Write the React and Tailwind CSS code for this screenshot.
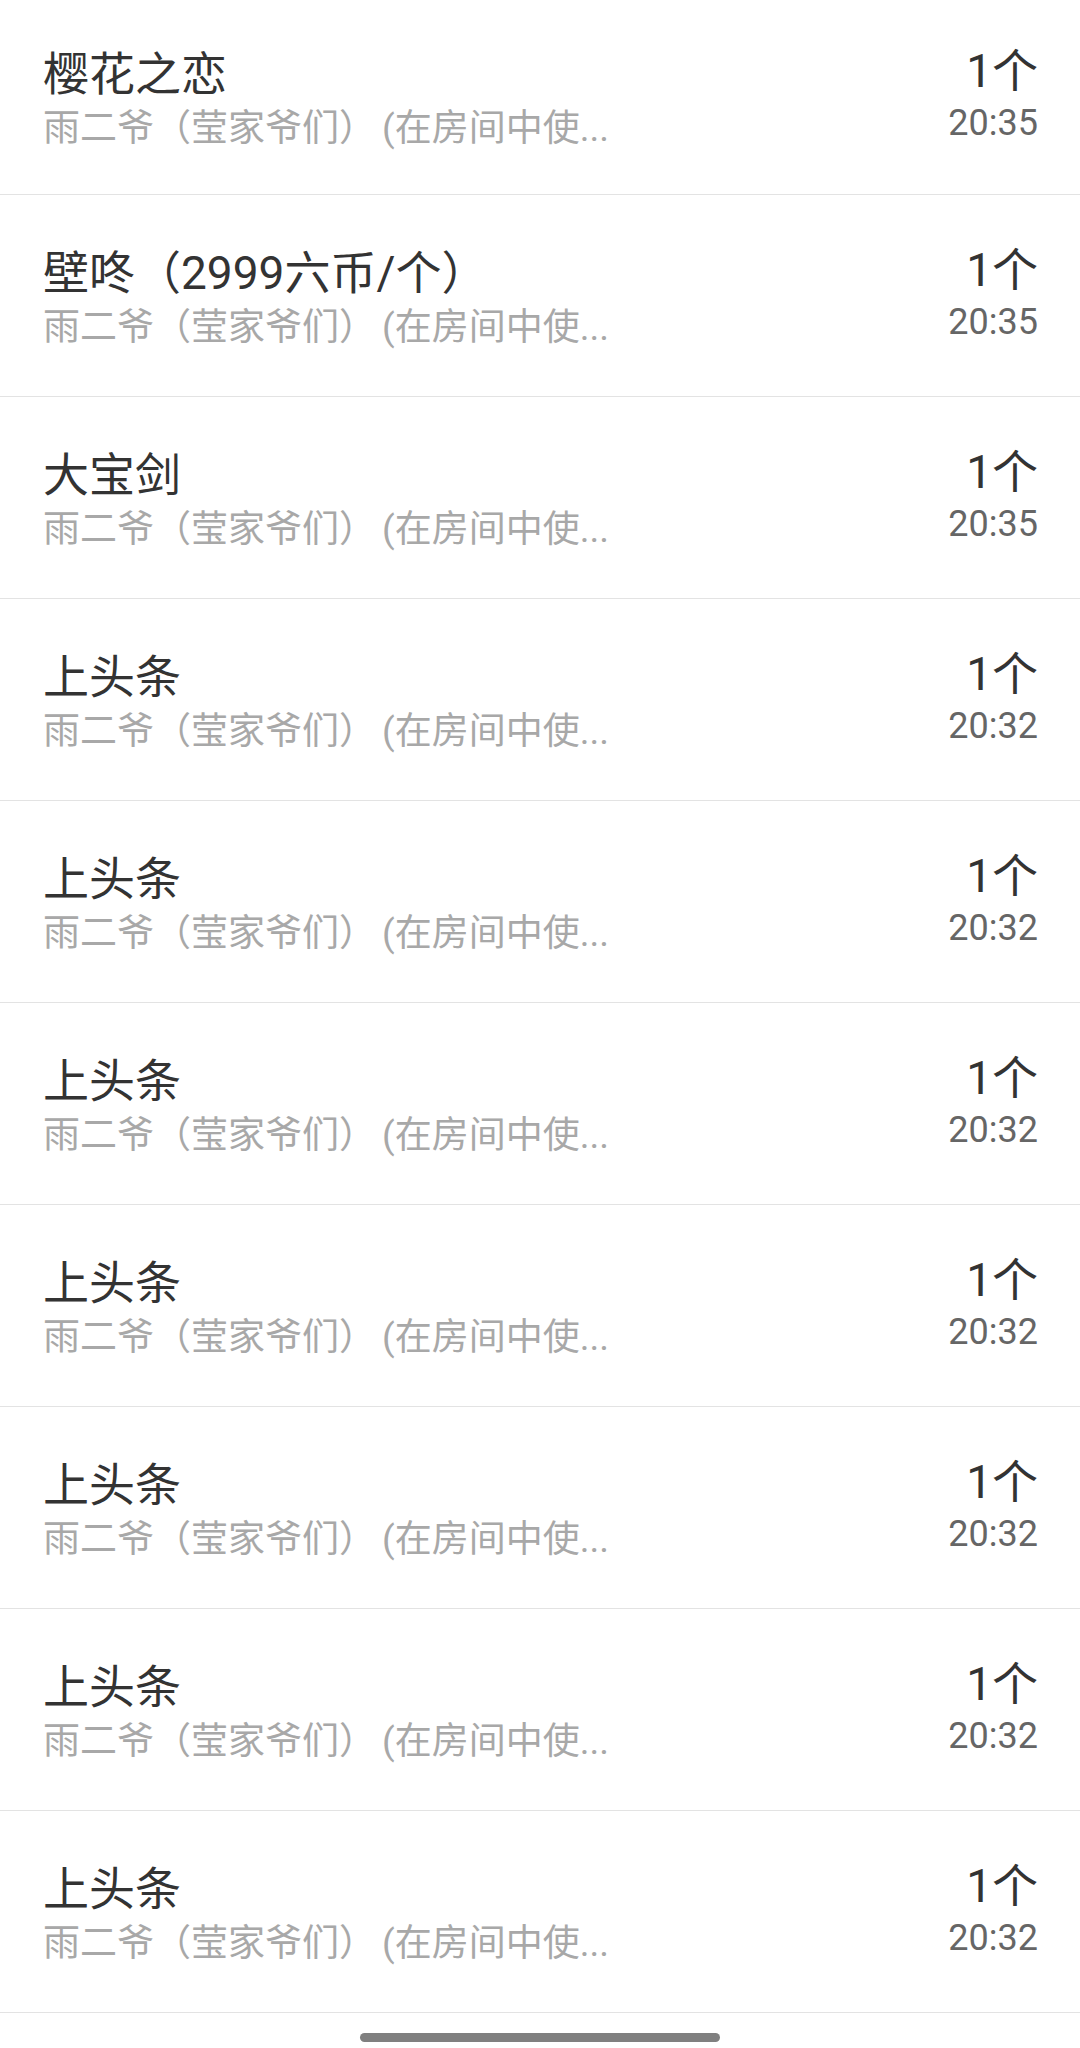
import React from 'react';

const records = [
  { name: '樱花之恋', time: '20:35' },
  { name: '壁咚（2999六币/个）', time: '20:35' },
  { name: '大宝剑', time: '20:35' },
  { name: '上头条', time: '20:32' },
  { name: '上头条', time: '20:32' },
  { name: '上头条', time: '20:32' },
  { name: '上头条', time: '20:32' },
  { name: '上头条', time: '20:32' },
  { name: '上头条', time: '20:32' },
  { name: '上头条', time: '20:32' },
];

function GiftRow({ item, first }) {
  return (
    <div
      className={
        'flex items-center justify-between pl-[43px] pr-[42px] border-b border-[#e3e3e3] ' +
        (first ? 'h-[195px]' : 'h-[202px]')
      }
    >
      <div className="flex flex-col">
        <div className="text-[46px] leading-[64px] text-[#333333]">{item.name}</div>
        <div className="text-[37px] leading-[46px] text-[#a8a8a8]">
          雨二爷（莹家爷们）<span className="pl-[6px]">(在房间中使...</span>
        </div>
      </div>
      <div className="flex flex-col items-end pb-[6px]">
        <div className="text-[46px] leading-[58px] text-[#333333]">1个</div>
        <div className="text-[36px] leading-[46px] text-[#666666]">{item.time}</div>
      </div>
    </div>
  );
}

export default function App() {
  return (
    <div className="w-[1080px] min-h-[2048px] bg-white font-['Roboto','Noto_Sans_CJK_SC',sans-serif]">
      {records.map((item, i) => (
        <GiftRow key={i} item={item} first={i === 0} />
      ))}
      <div className="h-[35px] flex justify-center pt-[20px]">
        <div className="w-[360px] h-[9px] rounded-full bg-[#808080]" />
      </div>
    </div>
  );
}
